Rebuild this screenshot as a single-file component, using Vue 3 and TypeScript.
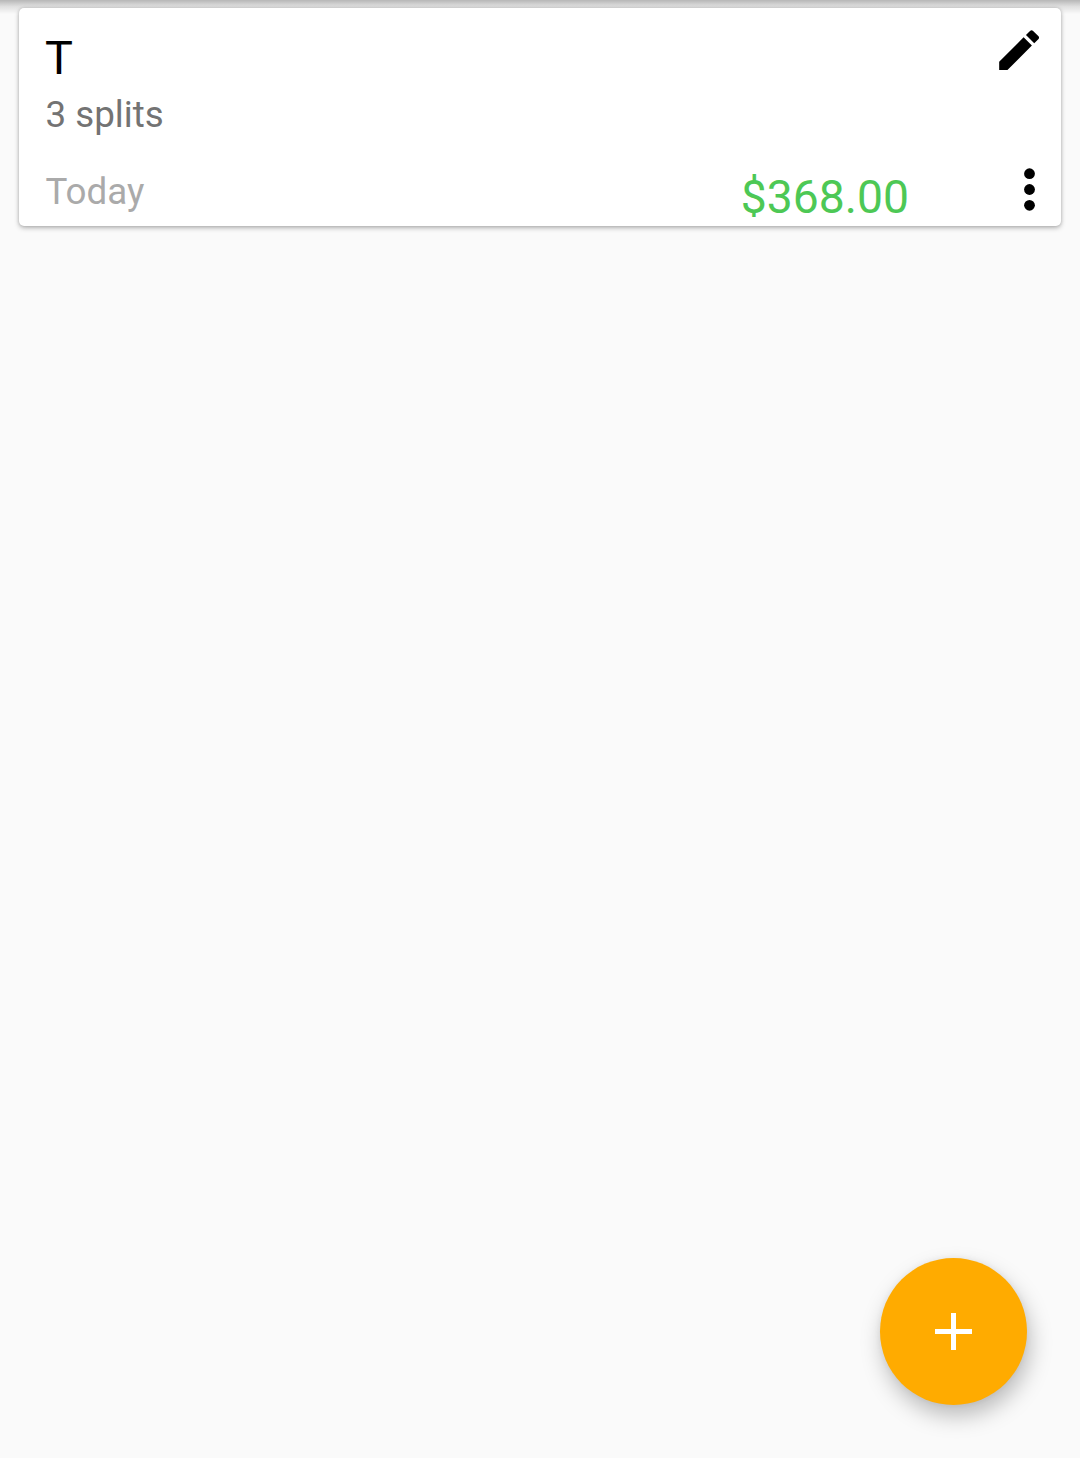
<script setup lang="ts">
interface Transaction {
  title: string
  splits: string
  date: string
  amount: string
}

const transactions: Transaction[] = [
  { title: 'T', splits: '3 splits', date: 'Today', amount: '$368.00' },
]
</script>

<template>
  <main class="screen">
    <div class="bar-shadow"></div>
    <article v-for="t in transactions" :key="t.title" class="card">
      <div class="top">
        <div>
          <div class="title">{{ t.title }}</div>
          <div class="splits">{{ t.splits }}</div>
        </div>
        <svg class="pencil" viewBox="0.2 0.15 24 24"><path d="M3 17.25V21h3.75L17.81 9.94l-3.75-3.75L3 17.25zM20.71 7.04a1 1 0 0 0 0-1.41l-2.34-2.34a1 1 0 0 0-1.41 0l-1.83 1.83 3.75 3.75 1.83-1.83z" /></svg>
      </div>
      <div class="bottom">
        <span class="date">{{ t.date }}</span>
        <span class="amount">{{ t.amount }}</span>
        <svg class="dots" viewBox="0 0 12 44"><circle cx="5.5" cy="5.7" r="5.4" /><circle cx="5.5" cy="21.5" r="5.4" /><circle cx="5.5" cy="37.3" r="5.4" /></svg>
      </div>
    </article>
    <button class="fab" aria-label="Add">
      <svg viewBox="0 0 37 37"><path d="M0 16h16V0h5v16h16v5H21v16h-5V21H0z" /></svg>
    </button>
  </main>
</template>

<style>
body { margin: 0; background: #fafafa; }
</style>

<style scoped>
.screen {
  position: relative;
  box-sizing: border-box;
  height: 1458px;
  padding: 8px 19px;
  overflow: hidden;
  background: #fafafa;
  font-family: Roboto, sans-serif;
}
.bar-shadow {
  position: absolute;
  inset: 0 0 auto;
  height: 14px;
  background: linear-gradient(rgba(0, 0, 0, 0.27), rgba(0, 0, 0, 0.11) 45%, transparent);
}
.card {
  position: relative;
  box-sizing: border-box;
  height: 218px;
  padding: 22px 22px 0 26.4px;
  border-radius: 5px;
  background: #fff;
  box-shadow: 0 2px 5px rgba(0, 0, 0, 0.28), 0 0 3px rgba(0, 0, 0, 0.14);
}
.top { display: flex; justify-content: space-between; height: 122px; }
.title { height: 57px; line-height: 56px; margin-left: -0.4px; font-size: 46.75px; color: #000; }
.splits { height: 56px; line-height: 56px; font-size: 36.75px; color: #737373; }
.pencil { width: 53px; height: 53px; margin: -7px -7px 0 0; position: relative; top: 1px; }
.bottom { display: flex; align-items: flex-start; }
.date { flex: 1; padding-top: 18px; line-height: 44px; font-size: 36.75px; color: #aaa; }
.amount { padding-top: 17px; line-height: 56px; font-size: 46.25px; color: #4dc855; }
.dots { width: 12px; height: 44px; margin: 16px 3px 0 115px; }
.fab {
  position: absolute;
  left: 880px;
  top: 1258px;
  display: grid;
  place-items: center;
  width: 147px;
  height: 147px;
  padding: 0;
  border: 0;
  border-radius: 50%;
  background: #ffab00;
  box-shadow: 3px 11px 22px rgba(0, 0, 0, 0.25), 0 0 6px rgba(0, 0, 0, 0.06);
}
.fab svg { width: 37px; height: 37px; fill: #fff; }
</style>
